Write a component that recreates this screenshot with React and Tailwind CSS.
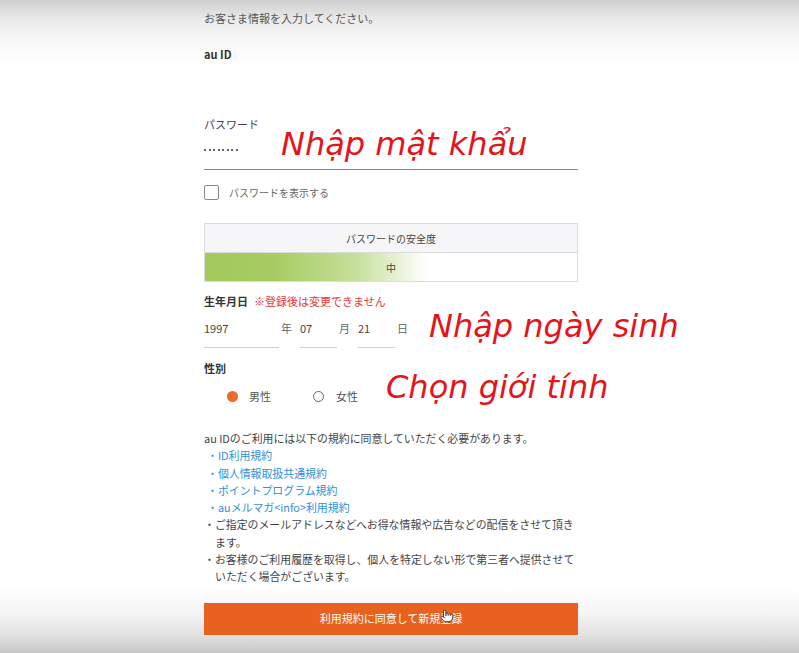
import { Pointer } from "lucide-react";

const jp = { fontFamily: '"Noto Sans CJK JP", "Liberation Sans", sans-serif' };
const note = { fontFamily: '"DejaVu Sans", sans-serif' };

function DateField({ value, width, label }) {
  return (
    <div className="flex items-start">
      <div
        className="h-[28px] border-b border-[#cfcfcf] text-[11px] leading-[16px] text-[#444]"
        style={{ width }}
      >
        {value}
      </div>
      <span className="ml-[2px] w-[19px] text-[11px] leading-[16px] text-[#666]">
        {label}
      </span>
    </div>
  );
}

export default function App() {
  const links = ["ID利用規約", "個人情報取扱共通規約", "ポイントプログラム規約", "auメルマガ<info>利用規約"];

  return (
    <div
      className="relative h-[653px] w-[799px] overflow-hidden bg-[linear-gradient(to_bottom,#cdcdcd_0px,#e9e9e9_18px,#f8f8f8_40px,#ffffff_65px,#ffffff_588px,#f5f5f5_612px,#e0e0e0_636px,#c6c6c6_653px)] text-[#333]"
      style={jp}
    >
      <div className="ml-[204px] w-[374px]">
        {/* intro */}
        <p className="mt-[10px] text-[11px] leading-[16px] text-[#555]">
          お客さま情報を入力してください。
        </p>

        {/* au ID */}
        <p className="mt-[20px] text-[11px] font-bold leading-[16px] text-[#333]">au ID</p>

        {/* password */}
        <p className="mt-[54px] text-[11px] leading-[16px] text-[#444]">パスワード</p>
        <div className="flex h-[38px] items-center gap-[2.5px] border-b border-[#888] pb-[1px]">
          {Array.from({ length: 8 }).map((_, i) => (
            <span key={i} className="h-[2px] w-[2px] rounded-full bg-[#333]" />
          ))}
        </div>

        <div className="mt-[15px] flex h-[15px] items-center">
          <span className="h-[15px] w-[15px] rounded-[2px] border border-[#888] bg-white" />
          <span className="ml-[10px] text-[10px] text-[#666]">パスワードを表示する</span>
        </div>

        {/* strength */}
        <div className="mt-[23px] border border-[#dcdcdc]">
          <div className="flex h-[28px] items-center justify-center bg-[#f6f6f9] text-[10px] text-[#444]">
            パスワードの安全度
          </div>
          <div className="flex h-[29px] items-center justify-center border-t border-[#dcdcdc] bg-[linear-gradient(to_right,#a2c95a_0px,#a8cc63_70px,#c5df9a_150px,#ffffff_222px)] text-[10px] text-[#444]">
            中
          </div>
        </div>

        {/* birthday */}
        <p className="mt-[11px] flex text-[11px] leading-[16px]">
          <span className="font-bold text-[#333]">生年月日</span>
          <span className="ml-[6px] text-[#e5393b]">※登録後は変更できません</span>
        </p>
        <div className="mt-[11px] flex">
          <DateField value="1997" width={75} label="年" />
          <DateField value="07" width={37} label="月" />
          <DateField value="21" width={37} label="日" />
        </div>

        {/* gender */}
        <p className="mt-[12px] text-[11px] font-bold leading-[16px] text-[#333]">性別</p>
        <div className="mt-[12px] flex h-[16px] items-center text-[11px] text-[#555]">
          <span className="ml-[23px] h-[11px] w-[11px] rounded-full bg-[#ee6a26]" />
          <span className="ml-[11px]">男性</span>
          <span className="ml-[42px] h-[11px] w-[11px] rounded-full border-[1.5px] border-[#666]" />
          <span className="ml-[12px]">女性</span>
        </div>

        {/* terms */}
        <div className="mt-[26px] whitespace-nowrap text-[10.9px] leading-[17.3px] text-[#444]">
          <p>au IDのご利用には以下の規約に同意していただく必要があります。</p>
          {links.map((l) => (
            <p key={l} className="pl-[3px] text-[#2f8fdc]">
              ・{l}
            </p>
          ))}
          <p className="pl-[11px] -indent-[11px]">
            ・ご指定のメールアドレスなどへお得な情報や広告などの配信をさせて頂き
            <br />
            ます。
          </p>
          <p className="pl-[11px] -indent-[11px]">
            ・お客様のご利用履歴を取得し、個人を特定しない形で第三者へ提供させて
            <br />
            いただく場合がございます。
          </p>
        </div>

        {/* submit */}
        <button className="relative mt-[17px] flex h-[32px] w-full items-center justify-center bg-[#e8611f] text-[11px] text-white">
          利用規約に同意して新規登録
          <Pointer
            className="absolute left-[236px] top-[6px] h-[14px] w-[14px] fill-white text-[#333]"
            strokeWidth={1.6}
          />
        </button>
      </div>

      {/* red annotations over the form */}
      <span
        className="absolute left-[281px] top-[124px] whitespace-nowrap text-[32px] italic leading-[40px] text-[#e5141a]"
        style={note}
      >
        Nhập mật khẩu
      </span>
      <span
        className="absolute left-[429px] top-[306px] whitespace-nowrap text-[32px] italic leading-[40px] text-[#e5141a]"
        style={note}
      >
        Nhập ngày sinh
      </span>
      <span
        className="absolute left-[386px] top-[367px] whitespace-nowrap text-[32px] italic leading-[40px] text-[#e5141a]"
        style={note}
      >
        Chọn giới tính
      </span>
    </div>
  );
}
